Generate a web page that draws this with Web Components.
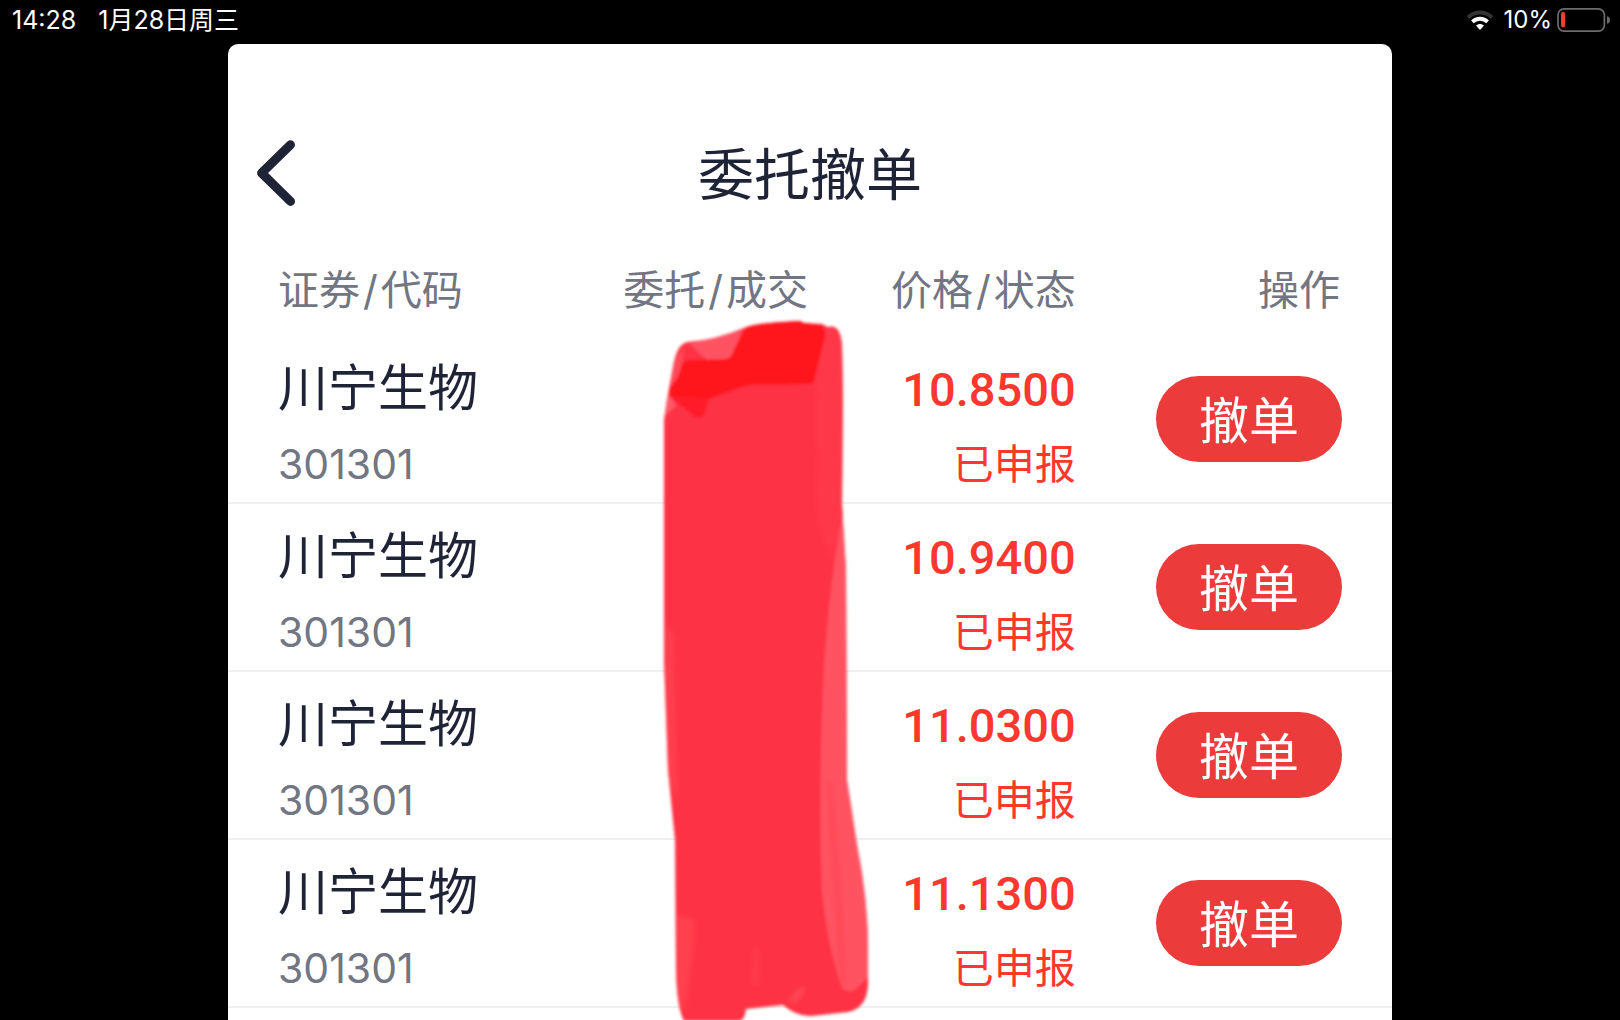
<!DOCTYPE html>
<html lang="zh-CN">
<head>
<meta charset="utf-8">
<meta name="viewport" content="width=device-width, initial-scale=1">
<title>委托撤单</title>
<style>
  html, body { margin: 0; height: 100%; background: #000; }
  body { font-family: Inter, "Noto Sans CJK SC", sans-serif; overflow: hidden; }
</style>
</head>
<body>
<cancel-app></cancel-app>
<script>
  const define = (name, html, setup) => {
    const template = document.createElement('template');
    template.innerHTML = html;
    customElements.define(name, class extends HTMLElement {
      constructor() {
        super();
        this.attachShadow({ mode: 'open' }).append(template.content.cloneNode(true));
      }
      connectedCallback() { if (setup) setup(this, this.shadowRoot); }
    });
  };

  define('wifi-icon', `
    <style>:host { display: block; } svg { display: block; }</style>
    <svg width="28" height="22" viewBox="0 0 28 22" fill="none" aria-hidden="true">
      <path d="M1.8 8.4C8.6 1.7 19.4 1.7 26.2 8.4" stroke="#333" stroke-width="4"/>
      <path d="M6.4 12.8C10.7 8.7 17.3 8.7 21.6 12.8" stroke="#fff" stroke-width="3.8"/>
      <path d="M10 16.6C12.2 14.5 15.8 14.5 18 16.6L14.8 20.2Q14 21 13.2 20.2Z" fill="#fff"/>
    </svg>`);

  define('battery-icon', `
    <style>:host { display: block; } svg { display: block; }</style>
    <svg width="54" height="24" viewBox="0 0 54 24" fill="none" aria-hidden="true">
      <rect x="1" y=".9" width="46.4" height="22.2" rx="6" stroke="#6c6c6c" stroke-width="1.7"/>
      <rect x="4" y="4" width="4.2" height="15.4" rx="1.8" fill="#ff3b30"/>
      <path d="M50 8.2Q53 9 53 12T50 15.8Z" fill="#6c6c6c"/>
    </svg>`);

  define('status-bar', `
    <style>
      :host { display: flex; justify-content: space-between; align-items: center; height: 40px;
        padding: 0 9px 0 12px; box-sizing: border-box; color: #fff;
        line-height: 40px; font-weight: 400; }
      div { display: flex; align-items: center; }
      .left { gap: 22px; font-size: 25px; }
      .right { gap: 5px; font-size: 24px; }
      .right span { margin-left: 5px; }
    </style>
    <div class="left"><span>14:28</span><span>1月28日周三</span></div>
    <div class="right"><wifi-icon></wifi-icon><span>10%</span><battery-icon></battery-icon></div>`);

  define('page-nav', `
    <style>
      :host { display: grid; grid-template-columns: 1fr auto 1fr; align-items: center;
        height: 82px; color: #1f2336; }
      button { justify-self: start; margin-left: 28px; padding: 0; border: 0; background: none; color: inherit; }
      svg { display: block; }
      h1 { margin: 0; padding-top: 4px; font-size: 56px; line-height: 78px; font-weight: 400; }
    </style>
    <button type="button" aria-label="返回">
      <svg width="40" height="66" viewBox="0 0 40 66" fill="none" stroke="currentColor" stroke-width="9"
        stroke-linecap="round" stroke-linejoin="round"><path d="M34.5 4.8L5.6 33L34.5 61.4"/></svg>
    </button>
    <h1><slot></slot></h1>`);

  define('column-title', `
    <style>
      :host { display: inline-flex; padding-top: 2px; font-size: 41px; line-height: 60px; font-weight: 400; color: #727582; }
      .slash { padding: 0 3px; }
      .slash[hidden] { display: none; }
    </style>
    <slot></slot><span class="slash">/</span><slot name="second"></slot>`,
    (host, root) => { root.querySelector('.slash').hidden = !host.querySelector('[slot=second]'); });

  define('stock-cell', `
    <style>
      :host { display: block; padding-top: 14px; }
      ::slotted(*) { display: block; line-height: 76px; }
      ::slotted([slot=name]) { font-size: 50px; color: #1f2336; }
      ::slotted([slot=code]) { font-size: 41px; color: #727582; }
    </style>
    <slot name="name"></slot><slot name="code"></slot>`);

  define('price-cell', `
    <style>
      :host { display: block; padding-top: 18px; text-align: right; color: #fb372f; }
      ::slotted(*) { display: block; }
      ::slotted([slot=price]) { font-family: Roboto, sans-serif; font-size: 47px; line-height: 72px; font-weight: 500; }
      ::slotted([slot=state]) { font-size: 41px; line-height: 76px; }
    </style>
    <slot name="price"></slot><slot name="state"></slot>`);

  define('cancel-button', `
    <style>
      :host { display: inline-block; vertical-align: middle; }
      button { display: block; border: 0; border-radius: 44px; background: #eb3b3b; color: #fff;
        font: inherit; font-size: 50px; line-height: 86px; height: 86px; width: 186px; padding: 2px 0 0; }
    </style>
    <button type="button"><slot></slot></button>`);

  define('marker-scribble', `
    <style>:host { display: block; pointer-events: none; } svg { display: block; }</style>
    <svg width="250" height="720" viewBox="630 310 250 720" aria-hidden="true">
      <defs>
        <filter id="edge" x="-5%" y="-5%" width="110%" height="110%"><feGaussianBlur stdDeviation="1.4"/></filter>
        <filter id="inner" x="-20%" y="-5%" width="140%" height="110%"><feGaussianBlur stdDeviation="2"/></filter>
        <clipPath id="body"><path d="M664 420L667 400L674 362Q678 343 688 342Q716 340 744 328Q752 323 800 321L804 323L822 324L828 327Q840 323 842 345L843 400L842 505L846 570L847 780L857 845Q868 900 868 950L868 985Q867 1008 848 1012L812 1016Q797 1017 783 1005L746 1009Q745 1021 738 1021L684 1021Q677 1008 676 970L675 840L668 770L664 660Z"/></clipPath>
      </defs>
      <g filter="url(#edge)">
        <path fill="#fe3344" d="M664 420L667 400L674 362Q678 343 688 342Q716 340 744 328Q752 323 800 321L804 323L822 324L828 327Q840 323 842 345L843 400L842 505L846 570L847 780L857 845Q868 900 868 950L868 985Q867 1008 848 1012L812 1016Q797 1017 783 1005L746 1009Q745 1021 738 1021L684 1021Q677 1008 676 970L675 840L668 770L664 660Z"/>
        <g clip-path="url(#body)">
          <path fill="#ff5362" d="M843 505Q829 590 824 665Q818 800 822 890Q827 945 842 988Q848 994 856 989L870 975L870 780L850 500Z"/>
          <path fill="#ff5362" d="M690 344L742 328L732 360L708 361Z"/>
          <path fill="#ff4a59" d="M672 362L684 348L681 375L666 390Z"/>
          <path fill="#ff5a68" d="M668 393L676 406L662 418Z"/>
          <g filter="url(#inner)">
            <path fill="#ff4857" d="M827 780Q833 900 841 980L846 984Q842 880 832 780Z"/>
            <path fill="#ff4150" d="M664 622L673 635L677 800L668 780Z"/>
            <path fill="#ff3848" d="M822 330L846 325L842 505L832 560L818 520L816 383Z"/>
            <path fill="#ff3f4e" d="M676 915L694 920Q694 960 684 1010L676 1005Z"/>
            <path fill="#ff5968" d="M793 994L804 986Q806 990 798 1000L789 1004Z" opacity=".6"/>
            <path fill="#ff4958" d="M753 985L755 948L758 950L757 985Z" opacity=".6"/>
          </g>
        </g>
        <path fill="#fe131e" d="M746 328Q754 323 800 321L804 323L821 325Q827 329 824 341L814 381Q813 384 808 384L752 385Q742 386 731 391L709 399L696 403L669 396Q668 391 673 384Q679 377 682 364Q684 360 694 360L726 359Q732 358 734 349Z"/>
        <path fill="#fe1f2b" d="M670 396L709 398L704 417L696 418Z"/>
      </g>
    </svg>`);

  define('order-table', `
    <style>
      :host { display: block; position: relative; margin-top: 28px; }
      table { width: 100%; table-layout: fixed; border-collapse: separate; border-spacing: 0; }
      th, td { padding: 0 2px 0 0; text-align: right; }
      th { height: 94px; font-weight: 400; }
      td { height: 166px; border-bottom: 2px solid #f0f0f1; vertical-align: top; }
      th:first-child, td:first-child { padding-left: 50px; text-align: left; white-space: nowrap; }
      th:last-child { padding-right: 52px; }
      td:last-child { padding-right: 50px; vertical-align: middle; line-height: 1px; }
      .stock { width: 27%; } .amount { width: 23%; } .price { width: 23%; } .action { width: 27%; }
      /* The marker stroke is drawn over the amount column. */
      marker-scribble { position: absolute; top: 68px; left: 50%; margin-left: -180px; }
    </style>
    <table>
      <colgroup><col class="stock"><col class="amount"><col class="price"><col class="action"></colgroup>
      <thead><tr>
        <th scope="col"><column-title>证券<span slot="second">代码</span></column-title></th>
        <th scope="col"><column-title>委托<span slot="second">成交</span></column-title></th>
        <th scope="col"><column-title>价格<span slot="second">状态</span></column-title></th>
        <th scope="col"><column-title>操作</column-title></th>
      </tr></thead>
      <tbody></tbody>
    </table>
    <marker-scribble></marker-scribble>`,
    (host, root) => {
      root.querySelector('tbody').innerHTML = host.getAttribute('prices').split(' ').map(price => `
        <tr>
          <td><stock-cell><span slot="name">川宁生物</span><span slot="code">301301</span></stock-cell></td>
          <td></td>
          <td><price-cell><span slot="price">${price}</span><span slot="state">已申报</span></price-cell></td>
          <td><cancel-button>撤单</cancel-button></td>
        </tr>`).join('');
    });

  define('cancel-app', `
    <style>
      :host { display: flex; flex-direction: column; height: 100vh; overflow: hidden; }
      main { flex: 1; min-height: 0; margin: 4px 228px 0; padding-top: 88px; background: #fff;
        border-radius: 10px 10px 0 0; overflow: hidden; }
    </style>
    <status-bar></status-bar>
    <main>
      <page-nav>委托撤单</page-nav>
      <order-table prices="10.8500 10.9400 11.0300 11.1300"></order-table>
    </main>`);
</script>
</body>
</html>
